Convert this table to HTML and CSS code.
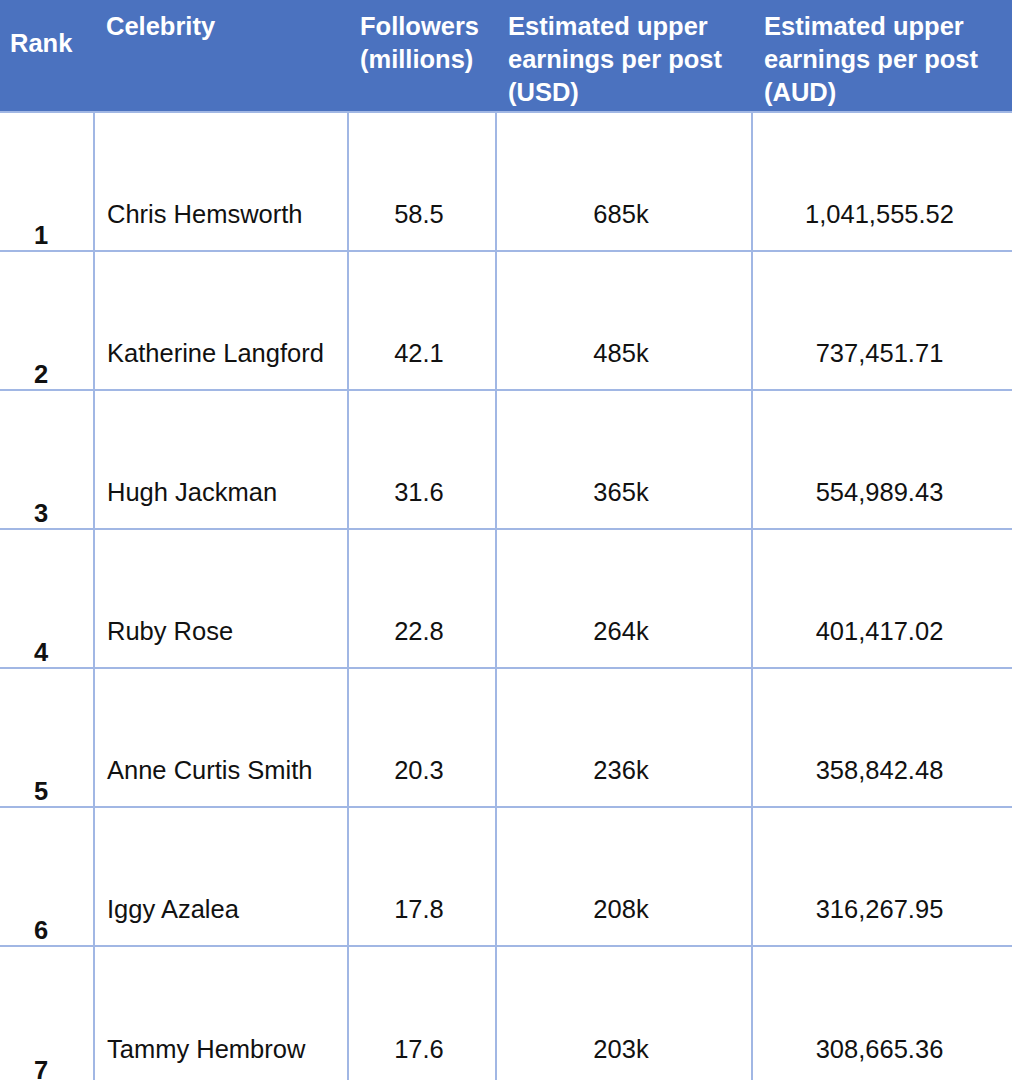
FILE: index.html
```html
<!DOCTYPE html>
<html lang="en">
<head>
<meta charset="utf-8">
<title>Celebrity earnings</title>
<link rel="stylesheet" href="styles.css">
</head>
<body>
<table class="ranking">
  <colgroup>
    <col class="c-rank">
    <col class="c-name">
    <col class="c-foll">
    <col class="c-usd">
    <col class="c-aud">
  </colgroup>
  <thead>
    <tr class="head-row">
      <th class="h-rank">Rank</th>
      <th>Celebrity</th>
      <th>Followers (millions)</th>
      <th>Estimated upper earnings per post (USD)</th>
      <th>Estimated upper earnings per post (AUD)</th>
    </tr>
  </thead>
  <tbody>
    <tr><td class="rank">1</td><td class="name">Chris Hemsworth</td><td class="num">58.5</td><td class="num">685k</td><td class="num">1,041,555.52</td></tr>
    <tr><td class="rank">2</td><td class="name">Katherine Langford</td><td class="num">42.1</td><td class="num">485k</td><td class="num">737,451.71</td></tr>
    <tr><td class="rank">3</td><td class="name">Hugh Jackman</td><td class="num">31.6</td><td class="num">365k</td><td class="num">554,989.43</td></tr>
    <tr><td class="rank">4</td><td class="name">Ruby Rose</td><td class="num">22.8</td><td class="num">264k</td><td class="num">401,417.02</td></tr>
    <tr><td class="rank">5</td><td class="name">Anne Curtis Smith</td><td class="num">20.3</td><td class="num">236k</td><td class="num">358,842.48</td></tr>
    <tr><td class="rank">6</td><td class="name">Iggy Azalea</td><td class="num">17.8</td><td class="num">208k</td><td class="num">316,267.95</td></tr>
    <tr><td class="rank">7</td><td class="name">Tammy Hembrow</td><td class="num">17.6</td><td class="num">203k</td><td class="num">308,665.36</td></tr>
  </tbody>
</table>
</body>
</html>
```
FILE: styles.css
```css
html, body {
  margin: 0;
  padding: 0;
  background: #ffffff;
}

body {
  font-family: "Liberation Sans", Arial, sans-serif;
  color: #111111;
  overflow: hidden;
}

.ranking {
  border-collapse: collapse;
  table-layout: fixed;
  width: 1012px;
  font-size: 25.5px;
}

.c-rank { width: 94px; }
.c-name { width: 254px; }
.c-foll { width: 148px; }
.c-usd { width: 256px; }
.c-aud { width: 260px; }

.head-row {
  height: 112px;
  background: #4b72bf;
}

.head-row th {
  color: #ffffff;
  font-weight: bold;
  text-align: left;
  vertical-align: top;
  line-height: 33px;
  padding: 10px 6px 0 12px;
  box-sizing: border-box;
}

.head-row .h-rank {
  padding-top: 27px;
  padding-left: 10px;
}

.ranking tbody tr {
  height: 139px;
}

.ranking td {
  border-top: 2px solid #a1b7e4;
  border-left: 2px solid #a1b7e4;
  vertical-align: bottom;
  line-height: 29px;
  padding: 0 0 21px 0;
}

.ranking td.rank {
  border-left: none;
  font-weight: bold;
  padding: 0 0 0 34px;
}

.ranking td.name {
  padding-left: 12px;
}

.ranking td.num {
  text-align: center;
  padding-right: 6px;
}
```
